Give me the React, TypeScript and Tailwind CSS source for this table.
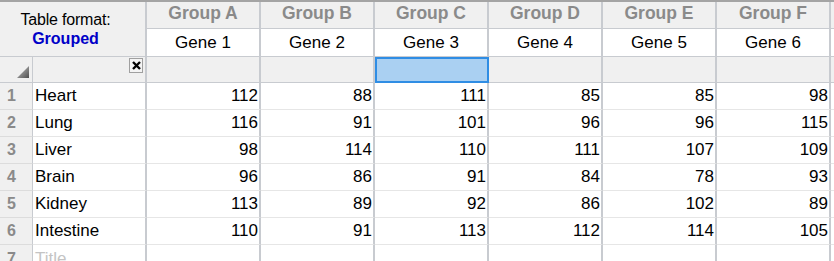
import React from 'react';

const groups = ['Group A', 'Group B', 'Group C', 'Group D', 'Group E', 'Group F'];
const genes = ['Gene 1', 'Gene 2', 'Gene 3', 'Gene 4', 'Gene 5', 'Gene 6'];

const rows: { label: string; values: number[] }[] = [
  { label: 'Heart', values: [112, 88, 111, 85, 85, 98] },
  { label: 'Lung', values: [116, 91, 101, 96, 96, 115] },
  { label: 'Liver', values: [98, 114, 110, 111, 107, 109] },
  { label: 'Brain', values: [96, 86, 91, 84, 78, 93] },
  { label: 'Kidney', values: [113, 89, 92, 86, 102, 89] },
  { label: 'Intestine', values: [110, 91, 113, 112, 114, 105] },
];

const font = { fontFamily: '"Liberation Sans", Arial, sans-serif' };

function Corner() {
  return (
    <svg width="12" height="12" viewBox="0 0 12 12" className="absolute right-[3px] bottom-[4px]">
      <defs>
        <linearGradient id="tri" x1="0" y1="0" x2="1" y2="1">
          <stop offset="0" stopColor="#c8c8c8" />
          <stop offset="1" stopColor="#505050" />
        </linearGradient>
      </defs>
      <polygon points="12,0 12,12 0,12" fill="url(#tri)" />
    </svg>
  );
}

export default function App() {
  return (
    <div className="w-[834px] h-[261px] overflow-hidden bg-white select-none text-[17px] text-black" style={font}>
      <div className="border-t-2 border-[#a4a4a4]">
        {/* Header block: format info + group/gene titles */}
        <div className="flex">
          <div className="w-[147px] h-[55px] shrink-0 bg-[#f0f0f0] border-r-2 border-b border-[#c8cbd0] flex flex-col items-center pr-[14px] pt-[8px] leading-[19px]">
            <span className="text-[16px] tracking-[-0.2px]">Table format:</span>
            <span className="text-[16px] font-bold text-[#0000c8]">Grouped</span>
          </div>
          {groups.map((g, i) => (
            <div key={g} className="w-[114px] shrink-0 flex flex-col border-r-2 border-[#c8cbd0]">
              <div className="h-[27px] bg-[#f0f0f0] border-b border-[#c8cbd0] flex justify-center pt-[1px] text-[17.5px] font-bold text-[#8a8a8a] leading-[20px]">
                {g}
              </div>
              <div className="h-[28px] bg-white border-b border-[#c8cbd0] flex items-center justify-center">
                {genes[i]}
              </div>
            </div>
          ))}
          <div className="flex-1 flex flex-col">
            <div className="h-[27px] bg-[#f0f0f0] border-b border-[#c8cbd0]" />
            <div className="h-[28px] bg-white border-b border-[#c8cbd0]" />
          </div>
        </div>

        {/* Column-title row */}
        <div className="flex h-[26px] bg-[#f0f0f0] border-b border-[#c8cbd0]">
          <div className="relative w-[33px] shrink-0 border-r border-[#c8cbd0]">
            <Corner />
          </div>
          <div className="w-[114px] shrink-0 border-r-2 border-[#c8cbd0] flex items-start justify-end pt-[1px] pr-[2px]">
            <div className="w-[14px] h-[15px] border border-[#a0a0a0] bg-[#f4f4f4] flex items-center justify-center">
              <svg width="9" height="9" viewBox="0 0 9 9">
                <path d="M1 1 L8 8 M8 1 L1 8" stroke="#000" strokeWidth="2.4" />
              </svg>
            </div>
          </div>
          {groups.map((g, i) => (
            <div
              key={g}
              className={`w-[114px] shrink-0 border-r-2 border-[#c8cbd0] ${
                i === 2 ? 'bg-[#aad0f2] outline-2 outline-[#2f8de4] -outline-offset-2 -mb-px' : ''
              }`}
            />
          ))}
          <div className="flex-1" />
        </div>

        {/* Data rows */}
        {rows.map((r, ri) => (
          <div key={r.label} className="flex h-[27px]">
            <div className="w-[33px] shrink-0 bg-[#f0f0f0] border-r border-b border-[#c8cbd0] border-b-[#dcdcdc] flex items-center pl-[7px] text-[16px] font-bold text-[#8a8a8a]">
              {ri + 1}
            </div>
            <div className="w-[114px] shrink-0 border-r-2 border-r-[#c8cbd0] border-b border-b-[#e6e6e6] flex items-center pl-[2px]">
              {r.label}
            </div>
            {r.values.map((v, vi) => (
              <div
                key={vi}
                className="w-[114px] shrink-0 border-r-2 border-r-[#c8cbd0] border-b border-b-[#e6e6e6] flex items-center justify-end pr-[1px]"
              >
                {v}
              </div>
            ))}
            <div className="flex-1 border-b border-[#e6e6e6]" />
          </div>
        ))}

        {/* Empty title row */}
        <div className="flex h-[27px]">
          <div className="w-[33px] shrink-0 bg-[#f0f0f0] border-r border-[#c8cbd0] flex items-center pl-[7px] text-[16px] font-bold text-[#8a8a8a]">
            7
          </div>
          <div className="w-[114px] shrink-0 border-r-2 border-[#c8cbd0] flex items-center pl-[2px] text-[#c4c4c4]">
            Title
          </div>
          {groups.map((g) => (
            <div key={g} className="w-[114px] shrink-0 border-r-2 border-[#c8cbd0]" />
          ))}
          <div className="flex-1" />
        </div>
      </div>
    </div>
  );
}
